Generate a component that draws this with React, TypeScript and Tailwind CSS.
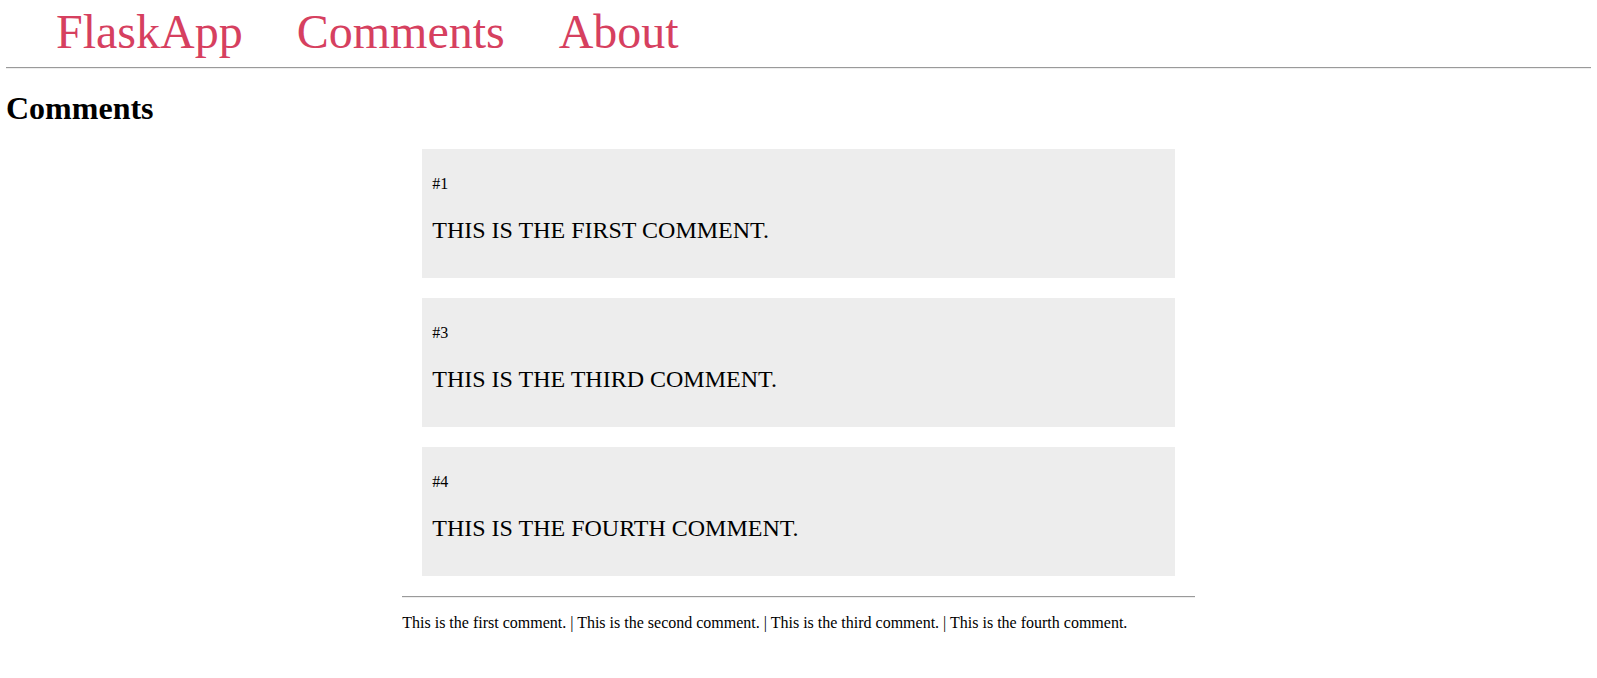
import React from 'react';

const comments = [
  { id: 1, text: 'This is the first comment.' },
  { id: 3, text: 'This is the third comment.' },
  { id: 4, text: 'This is the fourth comment.' },
];

const footer = [
  'This is the first comment.',
  'This is the second comment.',
  'This is the third comment.',
  'This is the fourth comment.',
];

export default function App() {
  return (
    <div className="min-h-screen bg-white px-[6px] pt-1 font-['Liberation_Serif',serif] text-black">
      <nav className="flex gap-[54px] pl-[50px] text-[48px] leading-[55px] text-[#d6405f]">
        <a href="#">FlaskApp</a>
        <a href="#">Comments</a>
        <a href="#">About</a>
      </nav>
      <hr className="mt-2 border-t border-b border-t-[#9a9a9a] border-b-[#eeeeee]" />

      <h1 className="mt-[21px] text-[32px] font-bold leading-[37px]">Comments</h1>

      <div className="mx-auto mt-[22px] w-1/2">
        <div className="flex flex-col gap-5 px-5">
          {comments.map(c => (
            <div key={c.id} className="bg-[#ededed] px-[10px] pt-[26px] pb-[34px]">
              <p className="text-[16px] leading-[18px]">#{c.id}</p>
              <p className="mt-[23px] text-[24px] uppercase leading-[28px]">{c.text}</p>
            </div>
          ))}
        </div>
        <hr className="mt-5 border-t border-b border-t-[#9a9a9a] border-b-[#eeeeee]" />
        <p className="mt-4 text-[16px] leading-[18px]">{footer.join(' | ')}</p>
      </div>
    </div>
  );
}
